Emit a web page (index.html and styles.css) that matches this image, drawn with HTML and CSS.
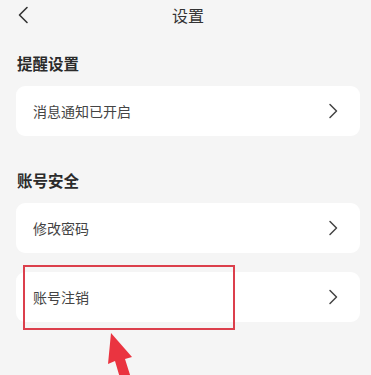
FILE: index.html
```html
<!DOCTYPE html>
<html lang="zh">
<head>
<meta charset="utf-8">
<link rel="stylesheet" href="styles.css">
</head>
<body>
<div class="page">
  <header class="topbar">
    <svg class="back" width="12" height="18" viewBox="0 0 12 18"><path d="M10 1.5 L2.5 9 L10 16.5" fill="none" stroke="#333" stroke-width="1.6" stroke-linecap="round" stroke-linejoin="round"/></svg>
    <div class="title">设置</div>
  </header>

  <div class="section-title first">提醒设置</div>
  <div class="card">
    <span class="label">消息通知已开启</span>
    <svg class="chev" width="10" height="16" viewBox="0 0 10 16"><path d="M2 1.5 L8.5 8 L2 14.5" fill="none" stroke="#444" stroke-width="1.5" stroke-linecap="round" stroke-linejoin="round"/></svg>
  </div>

  <div class="section-title">账号安全</div>
  <div class="card">
    <span class="label">修改密码</span>
    <svg class="chev" width="10" height="16" viewBox="0 0 10 16"><path d="M2 1.5 L8.5 8 L2 14.5" fill="none" stroke="#444" stroke-width="1.5" stroke-linecap="round" stroke-linejoin="round"/></svg>
  </div>
  <div class="card gap">
    <span class="label">账号注销</span>
    <svg class="chev" width="10" height="16" viewBox="0 0 10 16"><path d="M2 1.5 L8.5 8 L2 14.5" fill="none" stroke="#444" stroke-width="1.5" stroke-linecap="round" stroke-linejoin="round"/></svg>
  </div>

  <div class="highlight"></div>
  <svg class="arrow" width="40" height="45" viewBox="0 0 40 45"><path d="M15 0 L36 24 L29 26 L35 45 L24 45 L19 28 L12 31 Z" fill="#ea3440"/></svg>
</div>
</body>
</html>
```

FILE: styles.css
```css
html, body {
  margin: 0;
  padding: 0;
  background: #f5f5f5;
}
.page {
  position: relative;
  width: 371px;
  height: 375px;
  overflow: hidden;
  font-family: "Noto Sans CJK SC", "Noto Sans", sans-serif;
  color: #333;
}
.topbar {
  position: relative;
  height: 30px;
  display: flex;
  align-items: center;
  justify-content: center;
}
.back {
  position: absolute;
  left: 17px;
  top: 6px;
}
.title {
  font-size: 16px;
  line-height: 22px;
  color: #333;
  margin-left: 5px;
  margin-top: 0px;
}
.section-title {
  font-size: 15.5px;
  font-weight: bold;
  line-height: 22px;
  margin: 33px 0 12px 17px;
  color: #2b2b2b;
}
.section-title.first {
  margin-top: 22px;
}
.card {
  width: 344px;
  height: 50px;
  margin-left: 16px;
  background: #fff;
  border-radius: 9px;
  display: flex;
  align-items: center;
  justify-content: space-between;
  box-sizing: border-box;
  padding: 0 22px 0 17px;
}
.card.gap {
  margin-top: 19px;
}
.label {
  font-size: 14px;
  color: #444;
  line-height: 20px;
}
.chev {
  display: block;
}
.highlight {
  position: absolute;
  left: 23px;
  top: 265px;
  width: 208px;
  height: 61px;
  border: 2px solid #dc3f4c;
}
.arrow {
  position: absolute;
  left: 96px;
  top: 333px;
}
```
